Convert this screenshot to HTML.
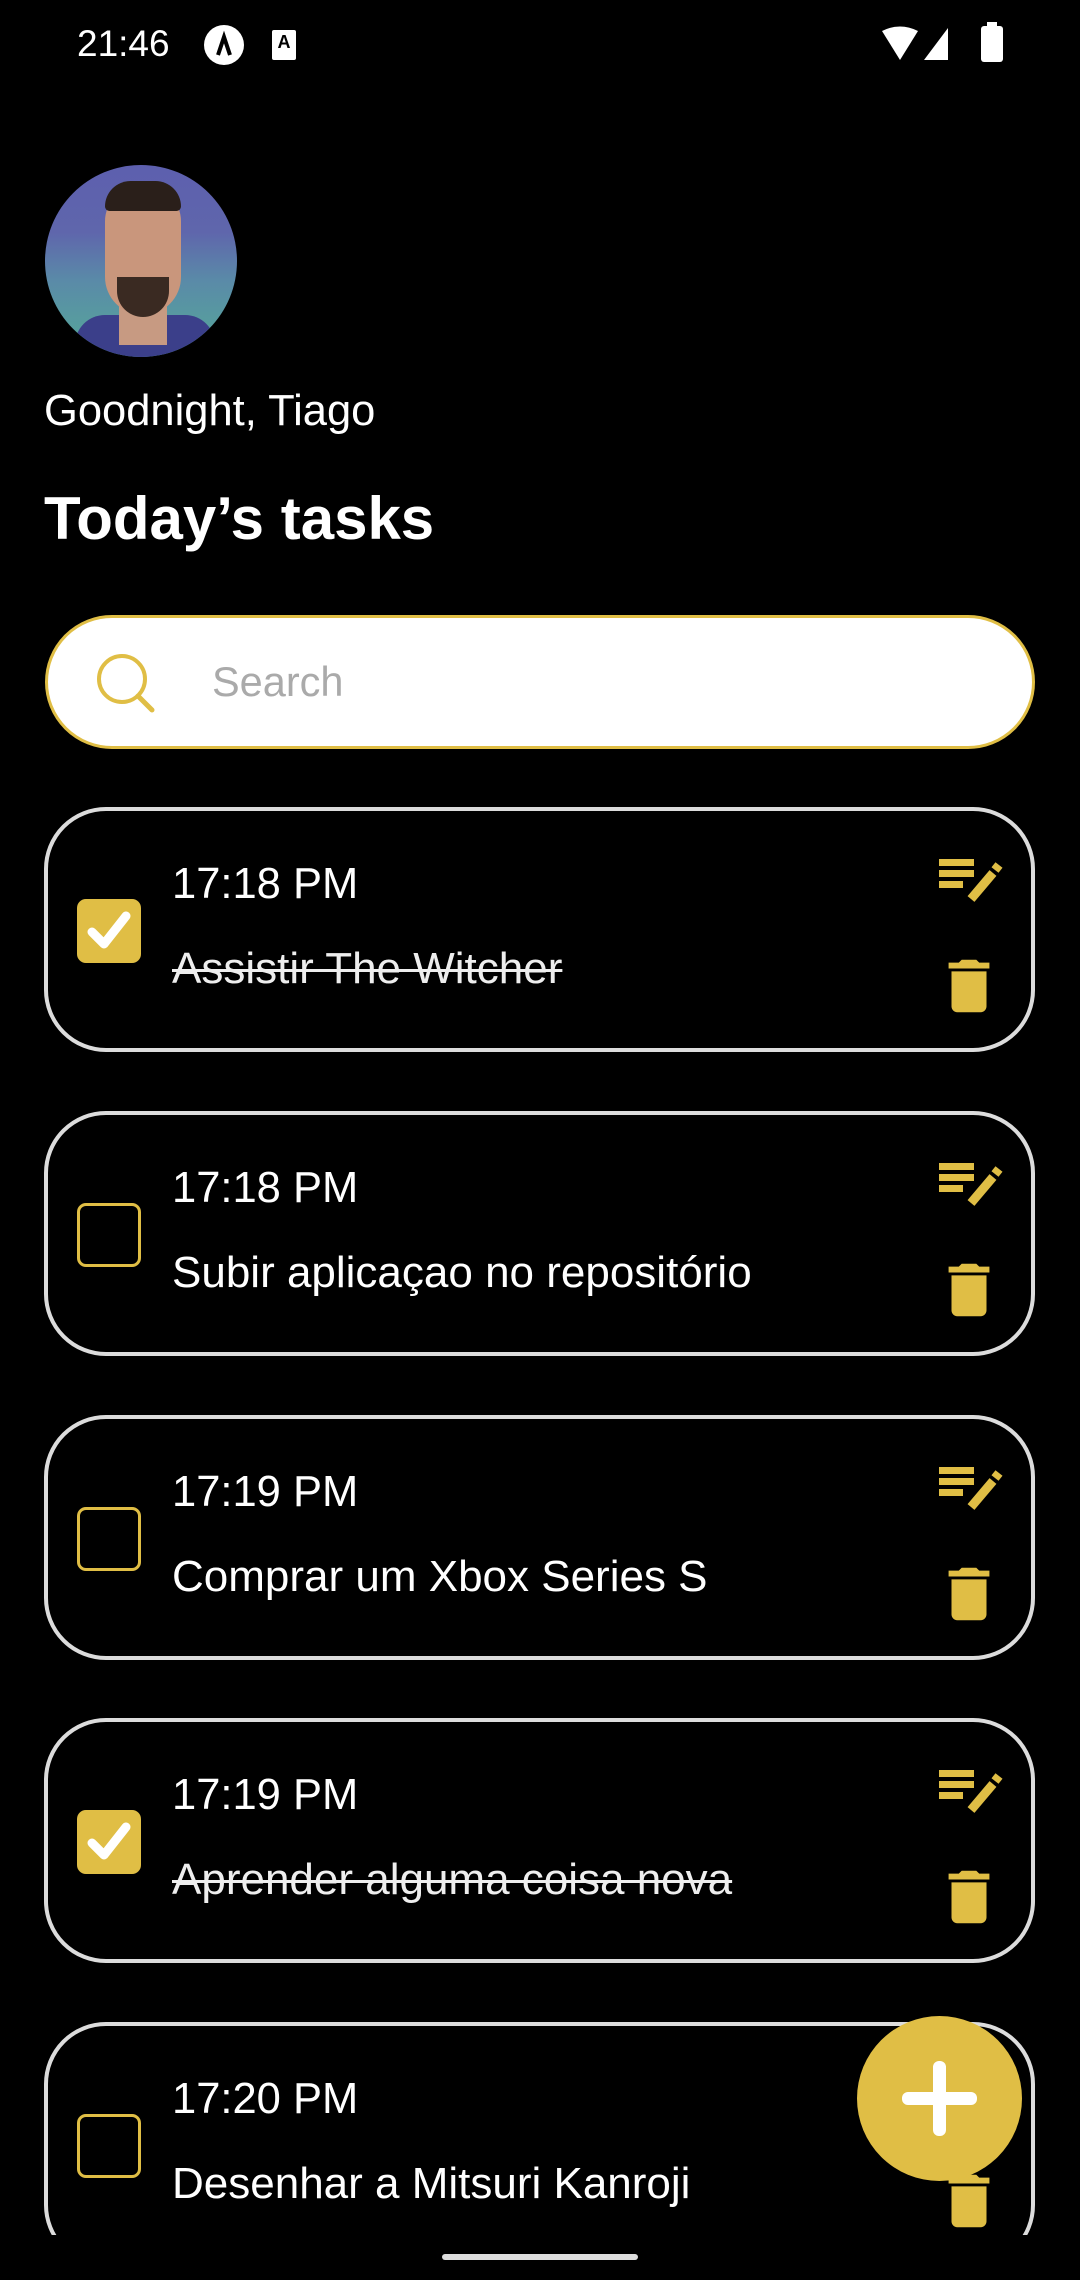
<!DOCTYPE html>
<html><head><meta charset="utf-8">
<style>
*{margin:0;padding:0;box-sizing:border-box}
body{width:1080px;height:2280px;background:#000;overflow:hidden;position:relative;font-family:"Liberation Sans",Roboto,sans-serif;color:#fff}
.abs{position:absolute}
.card{position:absolute;left:44px;width:991px;height:245px;border:4px solid #dcdcdc;border-radius:62px;background:#000}
.cb{position:absolute;left:29px;top:88px;width:64px;height:64px;border:3px solid #e0be45;border-radius:9px}
.cb.on{background:#e0be45}
.time{position:absolute;left:124px;top:49px;font-size:43.5px;line-height:48px}
.title{position:absolute;left:124px;top:134px;font-size:44px;line-height:48px;white-space:nowrap}
.title.done{text-decoration:line-through;text-decoration-thickness:3px;color:#eee}
.ed{position:absolute;left:891px;top:44px}
.tr{position:absolute;left:886px;top:140px}
</style></head><body>
<div class="abs" style="left:77px;top:22px;font-size:37px;line-height:44px">21:46</div>
<div class="abs" style="left:204px;top:25px;width:40px;height:40px;border-radius:50%;background:#fff"></div>
<svg class="abs" style="left:204px;top:25px" width="40" height="40" viewBox="0 0 40 40"><path d="M14 30 L20 12 L26 30" stroke="#000" stroke-width="4" fill="none"/></svg>
<div class="abs" style="left:272px;top:30px;width:24px;height:30px;background:#fff;border-radius:2px;color:#000;font-size:18px;font-weight:bold;text-align:center;line-height:24px">A</div>
<svg class="abs" style="left:880px;top:26px" width="110" height="36" viewBox="0 0 110 36">
<path d="M2 5 Q20 -4 38 5 L20 34 Z" fill="#fff"/>
<path d="M44 34 L68 34 L68 2 Z" fill="#fff"/>
</svg>
<div class="abs" style="left:981px;top:26px;width:22px;height:36px;background:#fff;border-radius:3px"></div>
<div class="abs" style="left:987px;top:22px;width:10px;height:6px;background:#fff"></div>

<div class="abs" style="left:45px;top:165px;width:192px;height:192px;border-radius:50%;background:linear-gradient(#5d5fae 0%,#5f66ac 35%,#5a8aa8 60%,#55aa98 100%);overflow:hidden">
  <div class="abs" style="left:30px;top:150px;width:140px;height:60px;background:#3b3f8a;border-radius:30px 30px 0 0"></div>
  <div class="abs" style="left:74px;top:120px;width:48px;height:60px;background:#c79a82"></div>
  <div class="abs" style="left:60px;top:22px;width:76px;height:128px;background:#c9967c;border-radius:36px 36px 40px 40px"></div>
  <div class="abs" style="left:60px;top:16px;width:76px;height:30px;background:#2a1f1a;border-radius:34px 34px 6px 6px"></div>
  <div class="abs" style="left:72px;top:112px;width:52px;height:40px;background:#3a2a22;border-radius:0 0 26px 26px"></div>
</div>
<div class="abs" style="left:44px;top:386px;font-size:43.5px;line-height:50px">Goodnight, Tiago</div>
<div class="abs" style="left:44px;top:483px;font-size:60px;font-weight:bold;line-height:72px">Today’s tasks</div>

<div class="abs" style="left:45px;top:615px;width:990px;height:134px;border:3px solid #e0be45;border-radius:67px;background:#fff"></div>
<svg class="abs" style="left:90px;top:648px" width="70" height="70" viewBox="0 0 70 70"><circle cx="32" cy="31" r="23" stroke="#e0be45" stroke-width="4" fill="none"/><path d="M48 48 L62 62" stroke="#e0be45" stroke-width="5" stroke-linecap="round"/></svg>
<div class="abs" style="left:212px;top:658px;font-size:41.5px;line-height:48px;color:#aaa">Search</div>

<!-- cards -->
<div class="card" style="top:807px">
<div class="cb on"><svg width="58" height="58" viewBox="0 0 58 58"><path d="M12 30 L24 42 L46 14" stroke="#fff" stroke-width="9" fill="none" stroke-linecap="round" stroke-linejoin="round"/></svg></div>
<div class="time">17:18 PM</div><div class="title done">Assistir The Witcher</div>
<svg class="ed" width="64" height="48" viewBox="0 0 64 48"><rect x="0" y="4" width="35" height="7" fill="#e0be45"/><rect x="0" y="15" width="35" height="7" fill="#e0be45"/><rect x="0" y="26" width="24" height="7" fill="#e0be45"/><path d="M32 44 L54 18" stroke="#e0be45" stroke-width="9"/><path d="M56 15 L60 10" stroke="#e0be45" stroke-width="9"/></svg>
<svg class="tr" width="70" height="70" viewBox="0 0 24 24"><path fill="#e0be45" d="M6 19c0 1.1.9 2 2 2h8c1.1 0 2-.9 2-2V7H6v12zM19 4h-3.5l-1-1h-5l-1 1H5v2h14V4z"/></svg>
</div>

<div class="card" style="top:1111px">
<div class="cb"></div>
<div class="time">17:18 PM</div><div class="title">Subir aplicaçao no repositório</div>
<svg class="ed" width="64" height="48" viewBox="0 0 64 48"><rect x="0" y="4" width="35" height="7" fill="#e0be45"/><rect x="0" y="15" width="35" height="7" fill="#e0be45"/><rect x="0" y="26" width="24" height="7" fill="#e0be45"/><path d="M32 44 L54 18" stroke="#e0be45" stroke-width="9"/><path d="M56 15 L60 10" stroke="#e0be45" stroke-width="9"/></svg>
<svg class="tr" width="70" height="70" viewBox="0 0 24 24"><path fill="#e0be45" d="M6 19c0 1.1.9 2 2 2h8c1.1 0 2-.9 2-2V7H6v12zM19 4h-3.5l-1-1h-5l-1 1H5v2h14V4z"/></svg>
</div>

<div class="card" style="top:1415px">
<div class="cb"></div>
<div class="time">17:19 PM</div><div class="title">Comprar um Xbox Series S</div>
<svg class="ed" width="64" height="48" viewBox="0 0 64 48"><rect x="0" y="4" width="35" height="7" fill="#e0be45"/><rect x="0" y="15" width="35" height="7" fill="#e0be45"/><rect x="0" y="26" width="24" height="7" fill="#e0be45"/><path d="M32 44 L54 18" stroke="#e0be45" stroke-width="9"/><path d="M56 15 L60 10" stroke="#e0be45" stroke-width="9"/></svg>
<svg class="tr" width="70" height="70" viewBox="0 0 24 24"><path fill="#e0be45" d="M6 19c0 1.1.9 2 2 2h8c1.1 0 2-.9 2-2V7H6v12zM19 4h-3.5l-1-1h-5l-1 1H5v2h14V4z"/></svg>
</div>

<div class="card" style="top:1718px">
<div class="cb on"><svg width="58" height="58" viewBox="0 0 58 58"><path d="M12 30 L24 42 L46 14" stroke="#fff" stroke-width="9" fill="none" stroke-linecap="round" stroke-linejoin="round"/></svg></div>
<div class="time">17:19 PM</div><div class="title done">Aprender alguma coisa nova</div>
<svg class="ed" width="64" height="48" viewBox="0 0 64 48"><rect x="0" y="4" width="35" height="7" fill="#e0be45"/><rect x="0" y="15" width="35" height="7" fill="#e0be45"/><rect x="0" y="26" width="24" height="7" fill="#e0be45"/><path d="M32 44 L54 18" stroke="#e0be45" stroke-width="9"/><path d="M56 15 L60 10" stroke="#e0be45" stroke-width="9"/></svg>
<svg class="tr" width="70" height="70" viewBox="0 0 24 24"><path fill="#e0be45" d="M6 19c0 1.1.9 2 2 2h8c1.1 0 2-.9 2-2V7H6v12zM19 4h-3.5l-1-1h-5l-1 1H5v2h14V4z"/></svg>
</div>

<div class="abs" style="left:0;top:2022px;width:1080px;height:213px;overflow:hidden">
<div class="card" style="top:0">
<div class="cb"></div>
<div class="time">17:20 PM</div><div class="title">Desenhar a Mitsuri Kanroji</div>
<svg class="tr" width="70" height="70" viewBox="0 0 24 24"><path fill="#e0be45" d="M6 19c0 1.1.9 2 2 2h8c1.1 0 2-.9 2-2V7H6v12zM19 4h-3.5l-1-1h-5l-1 1H5v2h14V4z"/></svg>
</div>
</div>

<div class="abs" style="left:857px;top:2016px;width:165px;height:165px;border-radius:50%;background:#e0be45"></div>
<div class="abs" style="left:902px;top:2092px;width:75px;height:13px;border-radius:6px;background:#fff"></div>
<div class="abs" style="left:933px;top:2061px;width:13px;height:75px;border-radius:6px;background:#fff"></div>

<div class="abs" style="left:442px;top:2254px;width:196px;height:6px;border-radius:3px;background:#ddd"></div>
</body></html>
